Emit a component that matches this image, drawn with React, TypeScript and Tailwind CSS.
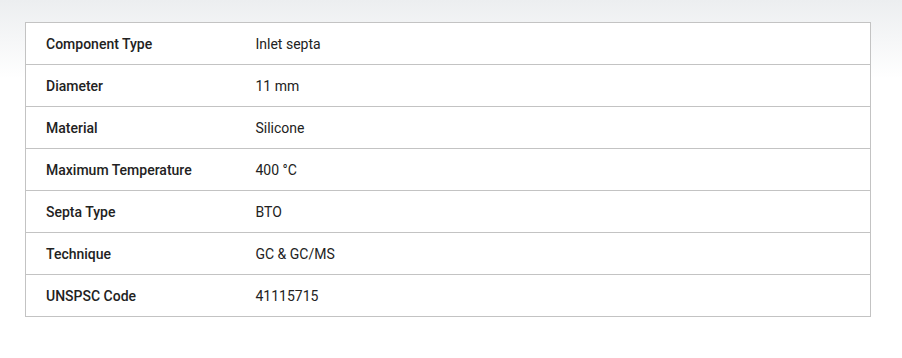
const rows = [
  ["Component Type", "Inlet septa"],
  ["Diameter", "11 mm"],
  ["Material", "Silicone"],
  ["Maximum Temperature", "400 °C"],
  ["Septa Type", "BTO"],
  ["Technique", "GC & GC/MS"],
  ["UNSPSC Code", "41115715"],
];

export default function App() {
  return (
    <div
      className="h-[358px] w-[902px] bg-linear-to-b from-[#eceef0] via-white via-[22%] to-white pt-[22px] pl-[25px]"
      style={{ fontFamily: "Roboto, 'Liberation Sans', sans-serif" }}
    >
      <table className="w-[846px] border-collapse border border-[#c3c3c3] bg-white text-[14px] text-[#222]">
        <tbody>
          {rows.map(([label, value]) => (
            <tr key={label} className="h-[42px] border-b border-[#c3c3c3]">
              <td className="w-[210px] pl-[20px] pt-[2px] font-medium">{label}</td>
              <td className="pl-[20px] pt-[2px]">{value}</td>
            </tr>
          ))}
        </tbody>
      </table>
    </div>
  );
}
